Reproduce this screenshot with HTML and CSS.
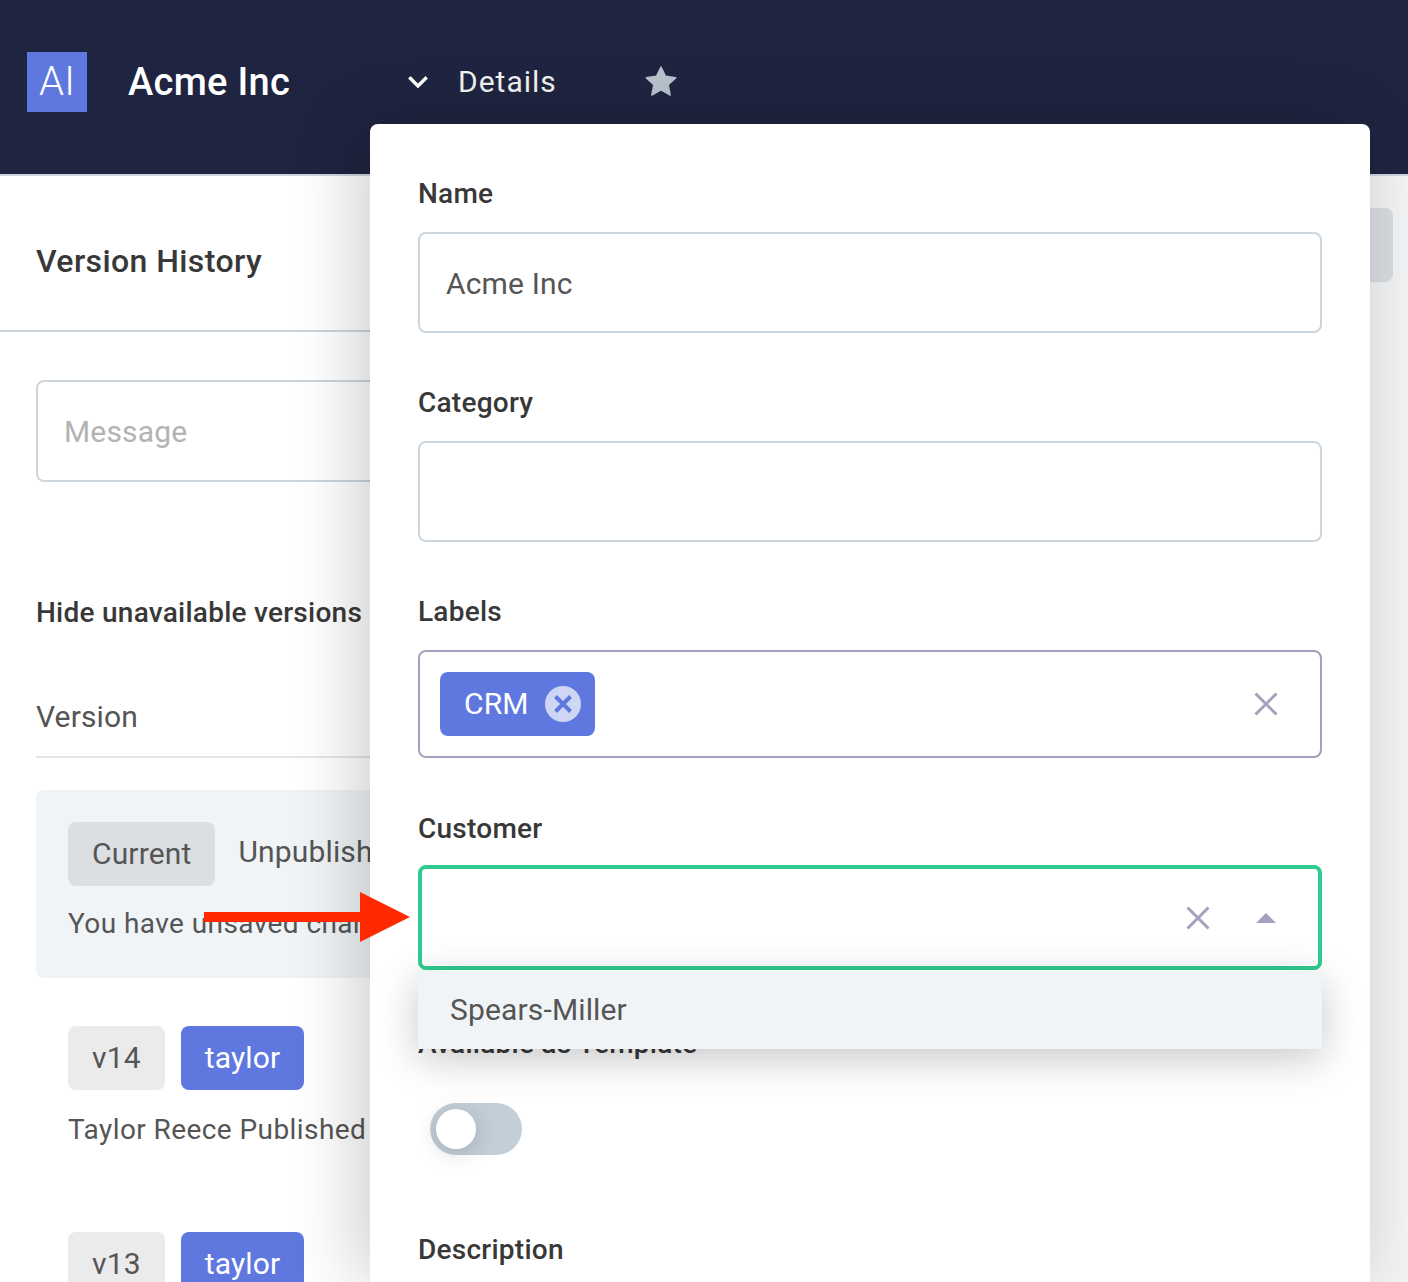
FILE: index.html
```html
<!DOCTYPE html>
<html lang="en">
<head>
    <meta charset="UTF-8">
    <title>Acme Inc - Details</title>
    <link rel="stylesheet" href="styles.css">
</head>
<body>
    <header class="topbar">
        <div class="logo">AI</div>
        <div class="app-name">Acme Inc</div>
        <svg class="chevron" viewBox="0 0 20 12" width="20" height="12"><path d="M1.3 1.3 L10 10 L18.7 1.3" fill="none" stroke="#fff" stroke-width="3.4"/></svg>
        <div class="details-link">Details</div>
        <svg class="star" viewBox="0 0 34 32" width="32" height="30"><path d="M17 1 L21.8 11 L32.8 12.4 L24.7 20 L26.8 31 L17 25.6 L7.2 31 L9.3 20 L1.2 12.4 L12.2 11 Z" fill="#b8c3cd" stroke="#b8c3cd" stroke-width="1.5" stroke-linejoin="round"/></svg>
    </header>

    <div class="workspace">
        <aside class="history">
            <div class="history-head">
                <h2>Version History</h2>
            </div>
            <div class="history-body">
                <div class="message-input">Message</div>
                <div class="hide-row">Hide unavailable versions</div>
                <div class="table-head">Version</div>

                <div class="version current">
                    <div class="version-tags">
                        <span class="tag tag-current">Current</span>
                        <span class="status">Unpublished</span>
                    </div>
                    <p>You have unsaved changes</p>
                </div>

                <div class="version">
                    <div class="version-tags">
                        <span class="tag tag-version">v14</span>
                        <span class="tag tag-user">taylor</span>
                    </div>
                    <p>Taylor Reece Published</p>
                </div>

                <div class="version">
                    <div class="version-tags">
                        <span class="tag tag-version">v13</span>
                        <span class="tag tag-user">taylor</span>
                    </div>
                </div>
            </div>
        </aside>
        <main class="canvas">
            <div class="canvas-button"></div>
        </main>
    </div>

    <!-- details popover, sits over the page -->
    <section class="details-panel">
        <div class="field">
            <label>Name</label>
            <div class="input">Acme Inc</div>
        </div>
        <div class="field">
            <label>Category</label>
            <div class="input"></div>
        </div>
        <div class="field">
            <label>Labels</label>
            <div class="input select select-labels">
                <span class="chip">CRM
                    <span class="chip-close">
                        <svg viewBox="0 0 20 20" width="20" height="20"><path d="M2.5 2.5 L17.5 17.5 M17.5 2.5 L2.5 17.5" stroke="#5f78e0" stroke-width="4" fill="none"/></svg>
                    </span>
                </span>
                <svg class="clear" viewBox="0 0 24 24" width="24" height="24"><path d="M1.5 1.5 L22.5 22.5 M22.5 1.5 L1.5 22.5" stroke="#a0a3bb" stroke-width="3" fill="none"/></svg>
            </div>
        </div>
        <div class="field field-customer">
            <label>Customer</label>
            <div class="input select select-focus">
                <svg class="clear" viewBox="0 0 24 24" width="24" height="24"><path d="M1.5 1.5 L22.5 22.5 M22.5 1.5 L1.5 22.5" stroke="#a0a3bb" stroke-width="3" fill="none"/></svg>
                <svg class="caret" viewBox="0 0 20 10" width="20" height="10"><path d="M10 0 L20 10 L0 10 Z" fill="#a0a3bb"/></svg>
            </div>
            <div class="dropdown">
                <div class="dropdown-item">Spears-Miller</div>
            </div>
        </div>
        <div class="field field-template">
            <label>Available as Template</label>
            <div class="toggle"><span class="toggle-knob"></span></div>
        </div>
        <div class="field">
            <label>Description</label>
        </div>
    </section>

    <svg class="callout-arrow" viewBox="0 0 206 50" width="206" height="50"><path d="M0 20 H156 V0 L206 25 L156 50 V30 H0 Z" fill="#ff2a00"/></svg>
</body>
</html>
```

FILE: styles.css
```css
* {
    box-sizing: border-box;
}

html, body {
    margin: 0;
    padding: 0;
    height: 1282px;
    overflow: hidden;
}

body {
    position: relative;
    font-family: Roboto, "Liberation Sans", sans-serif;
    font-size: 30px;
    letter-spacing: 0.15px;
    color: #555;
    background-color: #fff;
}

.topbar {
    display: flex;
    align-items: center;
    height: 176px;
    padding: 0 0 10px 27px;
    background-color: #1f2440;
    border-bottom: 2px solid #ccd6de;
}

.logo {
    width: 60px;
    height: 60px;
    line-height: 60px;
    text-align: center;
    font-size: 40px;
    font-weight: 300;
    color: #fff;
    background-color: #5f78e0;
}

.app-name {
    width: 280px;
    margin-left: 41px;
    font-size: 38px;
    font-weight: 500;
    letter-spacing: 0.3px;
    color: #fff;
}

.chevron {
    margin-right: 30px;
}

.details-link {
    width: 187px;
    margin-bottom: 2px;
    font-size: 30px;
    letter-spacing: 1px;
    color: #f2f2f2;
}

.star {
    margin-bottom: 2px;
}

.workspace {
    display: flex;
    height: 1106px;
}

.history {
    flex: 0 0 760px;
    background-color: #fff;
}

.history-head {
    height: 156px;
    padding: 16px 36px 0;
    display: flex;
    align-items: center;
    border-bottom: 2px solid #ccd6de;
}

.history-head h2 {
    margin: 0;
    font-size: 32px;
    font-weight: 500;
    letter-spacing: 0.4px;
    color: #383838;
}

.history-body {
    padding: 48px 0 0 36px;
}

.message-input {
    height: 102px;
    line-height: 100px;
    padding-left: 26px;
    border: 2px solid #ccd6de;
    border-radius: 8px;
    color: #b3b3b3;
}

.hide-row {
    margin-top: 110px;
    font-size: 28px;
    font-weight: 500;
    letter-spacing: 0.25px;
    color: #383838;
    line-height: 42px;
}

.table-head {
    height: 62px;
    margin-top: 62px;
    line-height: 42px;
    border-bottom: 2px solid #e3e6e9;
}

.version {
    padding: 32px 32px 34px;
    margin-top: 32px;
    border-radius: 8px;
}

.version + .version {
    margin-top: 16px;
}

.current {
    height: 188px;
    background-color: #f0f4f7;
}

.version-tags {
    display: flex;
    gap: 16px;
    height: 64px;
}

.tag {
    height: 64px;
    line-height: 64px;
    padding: 0 24px;
    border-radius: 8px;
}

.tag-current {
    background-color: #dcdfe2;
}

.tag-version {
    background-color: #ebebeb;
}

.tag-user {
    color: #fff;
    background-color: #5f78e0;
}

.status {
    margin-left: 7px;
    line-height: 60px;
}

.version p {
    margin: 20px 0 0;
    line-height: 40px;
    font-size: 28px;
    letter-spacing: 0.42px;
}

.current p {
    margin-top: 18px;
}

.canvas {
    flex: 1;
    padding: 32px 15px 0 0;
    background-color: #f2f3f5;
}

.canvas-button {
    height: 74px;
    border-radius: 8px;
    background-color: #d8dce0;
}

.details-panel {
    position: absolute;
    top: 124px;
    left: 370px;
    width: 1000px;
    height: 1158px;
    padding: 48px;
    background-color: #fff;
    border-radius: 8px 8px 0 0;
    box-shadow: -12px 0 70px rgba(0, 0, 0, 0.2);
}

.field {
    position: relative;
    margin-bottom: 48px;
}

.field label {
    display: block;
    height: 42px;
    margin-bottom: 18px;
    line-height: 44px;
    font-size: 28px;
    font-weight: 500;
    letter-spacing: 0.25px;
    color: #383838;
}

.input {
    height: 101px;
    line-height: 100px;
    padding-left: 26px;
    border: 2px solid #ccd6de;
    border-radius: 8px;
}

.select {
    display: flex;
    align-items: center;
    justify-content: flex-end;
}

.select-labels {
    height: 108px;
    padding-left: 20px;
    padding-right: 42px;
    border-color: #a0a3bb;
}

.chip {
    display: flex;
    align-items: center;
    height: 64px;
    padding: 0 14px 0 24px;
    margin-right: auto;
    color: #fff;
    background-color: #5f78e0;
    border-radius: 8px;
}

.chip-close {
    display: flex;
    align-items: center;
    justify-content: center;
    width: 36px;
    height: 36px;
    margin-left: 16px;
    border-radius: 50%;
    background-color: #cfd6f5;
}

.field-customer {
    padding-top: 1px;
    margin-bottom: 52px;
}

.field-customer label {
    margin-bottom: 16px;
}

.select-focus {
    height: 105px;
    padding-right: 42px;
    border: 4px solid #2ecc8f;
}

.select-focus .clear {
    margin-right: 46px;
}

.dropdown {
    position: absolute;
    top: 164px;
    left: 0;
    right: 0;
    z-index: 2;
    height: 79px;
    background-color: #f0f4f7;
    box-shadow: 0 10px 40px rgba(0, 0, 0, 0.22);
}

.dropdown-item {
    padding-left: 32px;
    line-height: 79px;
}

.field-template {
    margin-bottom: 73px;
}

.toggle {
    width: 92px;
    height: 52px;
    margin: 39px 0 0 12px;
    padding: 6px;
    border-radius: 26px;
    background-color: #c2ced8;
}

.toggle-knob {
    display: block;
    width: 40px;
    height: 40px;
    border-radius: 50%;
    background-color: #fff;
    box-shadow: 0 4px 22px rgba(0, 0, 0, 0.16);
}

.callout-arrow {
    position: absolute;
    top: 892px;
    left: 204px;
    z-index: 3;
}
```
